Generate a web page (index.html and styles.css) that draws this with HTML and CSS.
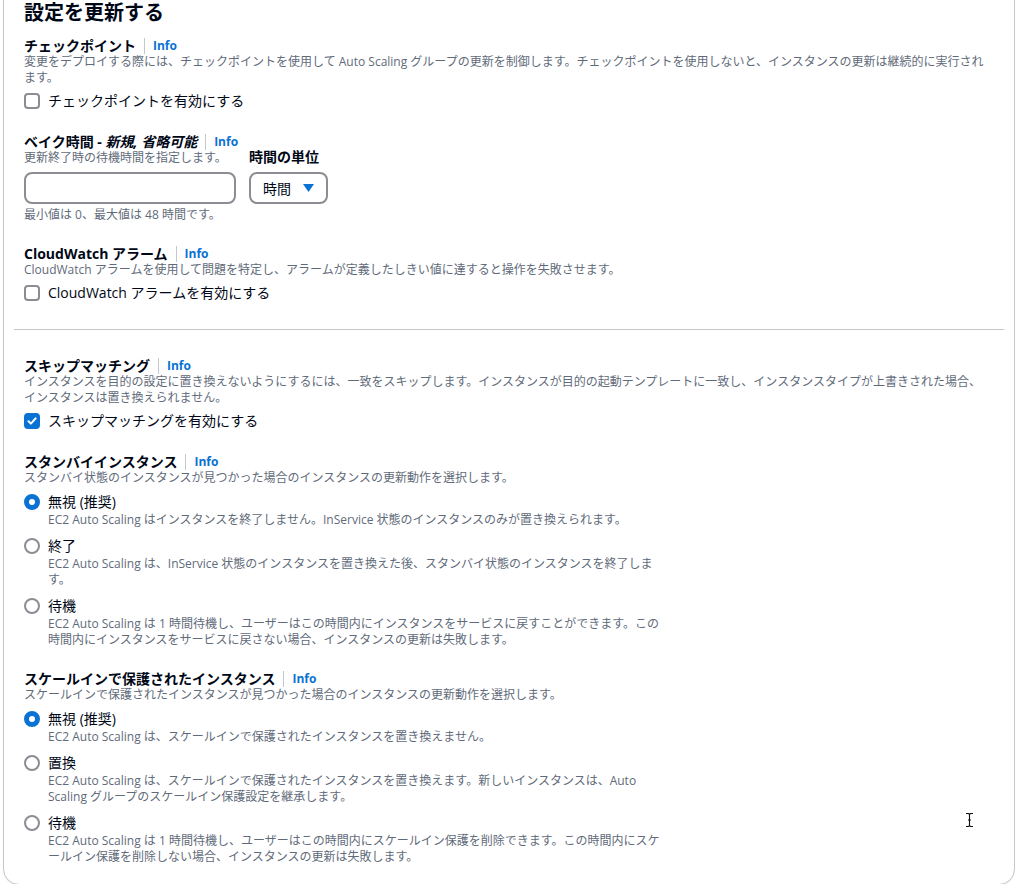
FILE: index.html
```html
<!DOCTYPE html>
<html lang="ja">
<head>
<meta charset="utf-8">
<title>設定を更新する</title>
<link rel="stylesheet" href="styles.css">
</head>
<body>
<div class="card">
  <h2 class="title">設定を更新する</h2>

  <section class="field">
    <div class="field-head"><span>チェックポイント</span><a class="info">Info</a></div>
    <p class="desc">変更をデプロイする際には、チェックポイントを使用して Auto Scaling グループの更新を制御します。チェックポイントを使用しないと、インスタンスの更新は継続的に実行されます。</p>
    <label class="control-row"><span class="checkbox"></span><span>チェックポイントを有効にする</span></label>
  </section>

  <section class="field">
    <div class="field-head"><span>ベイク時間 - <em>新規, 省略可能</em></span><a class="info">Info</a></div>
    <div class="bake-grid">
      <p class="desc">更新終了時の待機時間を指定します。</p>
      <div class="unit-label">時間の単位</div>
      <div class="input"></div>
      <div class="select"><span>時間</span><svg class="caret" width="11" height="8" viewBox="0 0 11 8"><path d="M0 0h11L5.5 8z" fill="#0972d3"/></svg></div>
      <p class="desc hint">最小値は 0、最大値は 48 時間です。</p>
    </div>
  </section>

  <section class="field">
    <div class="field-head"><span>CloudWatch アラーム</span><a class="info">Info</a></div>
    <p class="desc">CloudWatch アラームを使用して問題を特定し、アラームが定義したしきい値に達すると操作を失敗させます。</p>
    <label class="control-row"><span class="checkbox"></span><span>CloudWatch アラームを有効にする</span></label>
  </section>

  <hr class="divider">

  <section class="field first">
    <div class="field-head"><span>スキップマッチング</span><a class="info">Info</a></div>
    <p class="desc">インスタンスを目的の設定に置き換えないようにするには、一致をスキップします。インスタンスが目的の起動テンプレートに一致し、インスタンスタイプが上書きされた場合、インスタンスは置き換えられません。</p>
    <label class="control-row"><span class="checkbox checked"><svg width="10" height="10" viewBox="0 0 10 10"><path d="M1.5 5.2l2.4 2.4L8.6 2.4" fill="none" stroke="#fff" stroke-width="2" stroke-linecap="round" stroke-linejoin="round"/></svg></span><span>スキップマッチングを有効にする</span></label>
  </section>

  <section class="field">
    <div class="field-head"><span>スタンバイインスタンス</span><a class="info">Info</a></div>
    <p class="desc">スタンバイ状態のインスタンスが見つかった場合のインスタンスの更新動作を選択します。</p>
    <div class="radio-group">
      <div class="radio-option">
        <span class="radio checked"></span>
        <span class="radio-label">無視 (推奨)</span>
        <p class="desc radio-desc">EC2 Auto Scaling はインスタンスを終了しません。InService 状態のインスタンスのみが置き換えられます。</p>
      </div>
      <div class="radio-option">
        <span class="radio"></span>
        <span class="radio-label">終了</span>
        <p class="desc radio-desc">EC2 Auto Scaling は、InService 状態のインスタンスを置き換えた後、スタンバイ状態のインスタンスを終了します。</p>
      </div>
      <div class="radio-option">
        <span class="radio"></span>
        <span class="radio-label">待機</span>
        <p class="desc radio-desc">EC2 Auto Scaling は 1 時間待機し、ユーザーはこの時間内にインスタンスをサービスに戻すことができます。この時間内にインスタンスをサービスに戻さない場合、インスタンスの更新は失敗します。</p>
      </div>
    </div>
  </section>

  <section class="field">
    <div class="field-head"><span>スケールインで保護されたインスタンス</span><a class="info">Info</a></div>
    <p class="desc">スケールインで保護されたインスタンスが見つかった場合のインスタンスの更新動作を選択します。</p>
    <div class="radio-group">
      <div class="radio-option">
        <span class="radio checked"></span>
        <span class="radio-label">無視 (推奨)</span>
        <p class="desc radio-desc">EC2 Auto Scaling は、スケールインで保護されたインスタンスを置き換えません。</p>
      </div>
      <div class="radio-option">
        <span class="radio"></span>
        <span class="radio-label">置換</span>
        <p class="desc radio-desc">EC2 Auto Scaling は、スケールインで保護されたインスタンスを置き換えます。新しいインスタンスは、Auto Scaling グループのスケールイン保護設定を継承します。</p>
      </div>
      <div class="radio-option">
        <span class="radio"></span>
        <span class="radio-label">待機</span>
        <p class="desc radio-desc">EC2 Auto Scaling は 1 時間待機し、ユーザーはこの時間内にスケールイン保護を削除できます。この時間内にスケールイン保護を削除しない場合、インスタンスの更新は失敗します。</p>
      </div>
    </div>
  </section>
</div>
<svg class="cursor" width="9" height="16" viewBox="0 0 9 16"><path d="M1 1.5h2.5L4.5 2.5L5.5 1.5H8M4.5 2.5v11M1 14.5h2.5L4.5 13.5L5.5 14.5H8M3 8h3" fill="none" stroke="#111" stroke-width="1.1"/></svg>
</body>
</html>
```

FILE: styles.css
```css
html, body {
  margin: 0;
  padding: 0;
  background: #ffffff;
}

body {
  position: relative;
  font-family: "Open Sans", "Noto Sans CJK JP", sans-serif;
  color: #000716;
  width: 1025px;
  height: 884px;
  overflow: hidden;
}

.card {
  box-sizing: border-box;
  width: 1012px;
  margin: -20px 0 0 3px;
  padding: 20px 20px 19px 20px;
  border: 1px solid #c6c6cd;
  border-radius: 16px;
  background: #ffffff;
  box-shadow: 0 1px 1px rgba(0, 7, 22, 0.06);
}

.title {
  margin: 0;
  font-size: 20px;
  line-height: 24px;
  font-weight: 700;
}

.field {
  margin-top: 23px;
  max-width: 961px;
}

.title + .field {
  margin-top: 13px;
}

.field.first {
  margin-top: 28px;
}

.field-head {
  display: flex;
  align-items: center;
  font-size: 14px;
  line-height: 16px;
  font-weight: 700;
}

.field-head em {
  font-style: italic;
}

.info {
  margin-left: 8px;
  padding-left: 8px;
  border-left: 1px solid #c6c6cd;
  font-size: 12px;
  line-height: 16px;
  font-weight: 700;
  color: #0972d3;
  cursor: pointer;
}

.desc {
  margin: 0;
  font-size: 12px;
  line-height: 16px;
  color: #5f6b7a;
}

.control-row {
  margin-top: 5px;
  display: flex;
  align-items: center;
  gap: 8px;
  font-size: 14px;
  line-height: 20px;
}

.checkbox {
  box-sizing: border-box;
  width: 16px;
  height: 16px;
  border: 2px solid #8c8c94;
  border-radius: 4px;
  display: flex;
  align-items: center;
  justify-content: center;
  flex: none;
}

.checkbox.checked {
  background: #0972d3;
  border-color: #0972d3;
}

.bake-grid {
  display: grid;
  grid-template-columns: 212px auto;
  justify-content: start;
  column-gap: 13px;
  align-items: end;
}

.unit-label {
  font-size: 14px;
  line-height: 16px;
  font-weight: 700;
  align-self: start;
  margin-top: -1px;
}

.input {
  box-sizing: border-box;
  height: 32px;
  margin-top: 6px;
  border: 2px solid #8c8c94;
  border-radius: 8px;
}

.select {
  box-sizing: border-box;
  width: 79px;
  height: 32px;
  margin-top: 6px;
  padding-left: 12px;
  border: 2px solid #8c8c94;
  border-radius: 8px;
  display: flex;
  align-items: center;
  font-size: 14px;
}

.caret {
  margin-left: 12px;
}

.hint {
  grid-column: 1 / 3;
  margin-top: 3px;
}

.divider {
  margin: 26px -10px 0 -10px;
  border: 0;
  border-top: 1px solid #c6c6cd;
  height: 0;
}

.radio-group {
  margin-top: 6px;
  width: 640px;
  display: flex;
  flex-direction: column;
  gap: 8px;
}

.radio-option {
  display: grid;
  grid-template-columns: 16px 1fr;
  column-gap: 8px;
  align-items: center;
}

.radio {
  box-sizing: border-box;
  width: 16px;
  height: 16px;
  border: 2px solid #8c8c94;
  border-radius: 50%;
  background: #fff;
}

.radio.checked {
  border: 5px solid #0972d3;
}

.radio-label {
  font-size: 14px;
  line-height: 20px;
}

.radio-desc {
  grid-column: 2;
}

.cursor {
  position: absolute;
  left: 965px;
  top: 812px;
}
```
